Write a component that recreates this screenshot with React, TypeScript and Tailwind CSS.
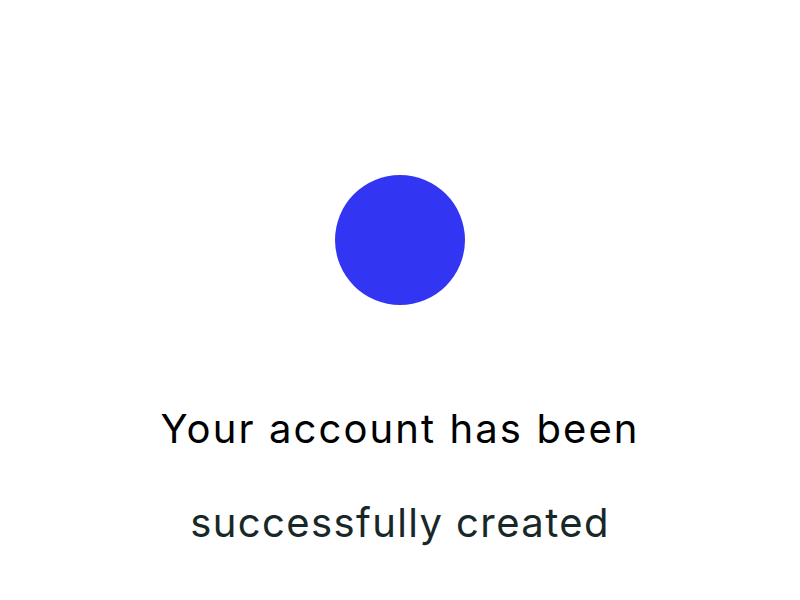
export default function App() {
  return (
    <div className="w-[800px] h-[600px] bg-white flex flex-col items-center pt-[175px] font-['Inter',sans-serif]">
      <div className="w-[130px] h-[130px] rounded-full bg-[#3236f3]" />
      <h1 className="mt-[94px] text-[40px] leading-[60px] font-normal text-black tracking-[2.1px]">
        Your account has been
      </h1>
      <p className="mt-[34px] text-[40px] leading-[60px] font-normal text-[#182828] tracking-[1.4px]">
        successfully created
      </p>
    </div>
  )
}
